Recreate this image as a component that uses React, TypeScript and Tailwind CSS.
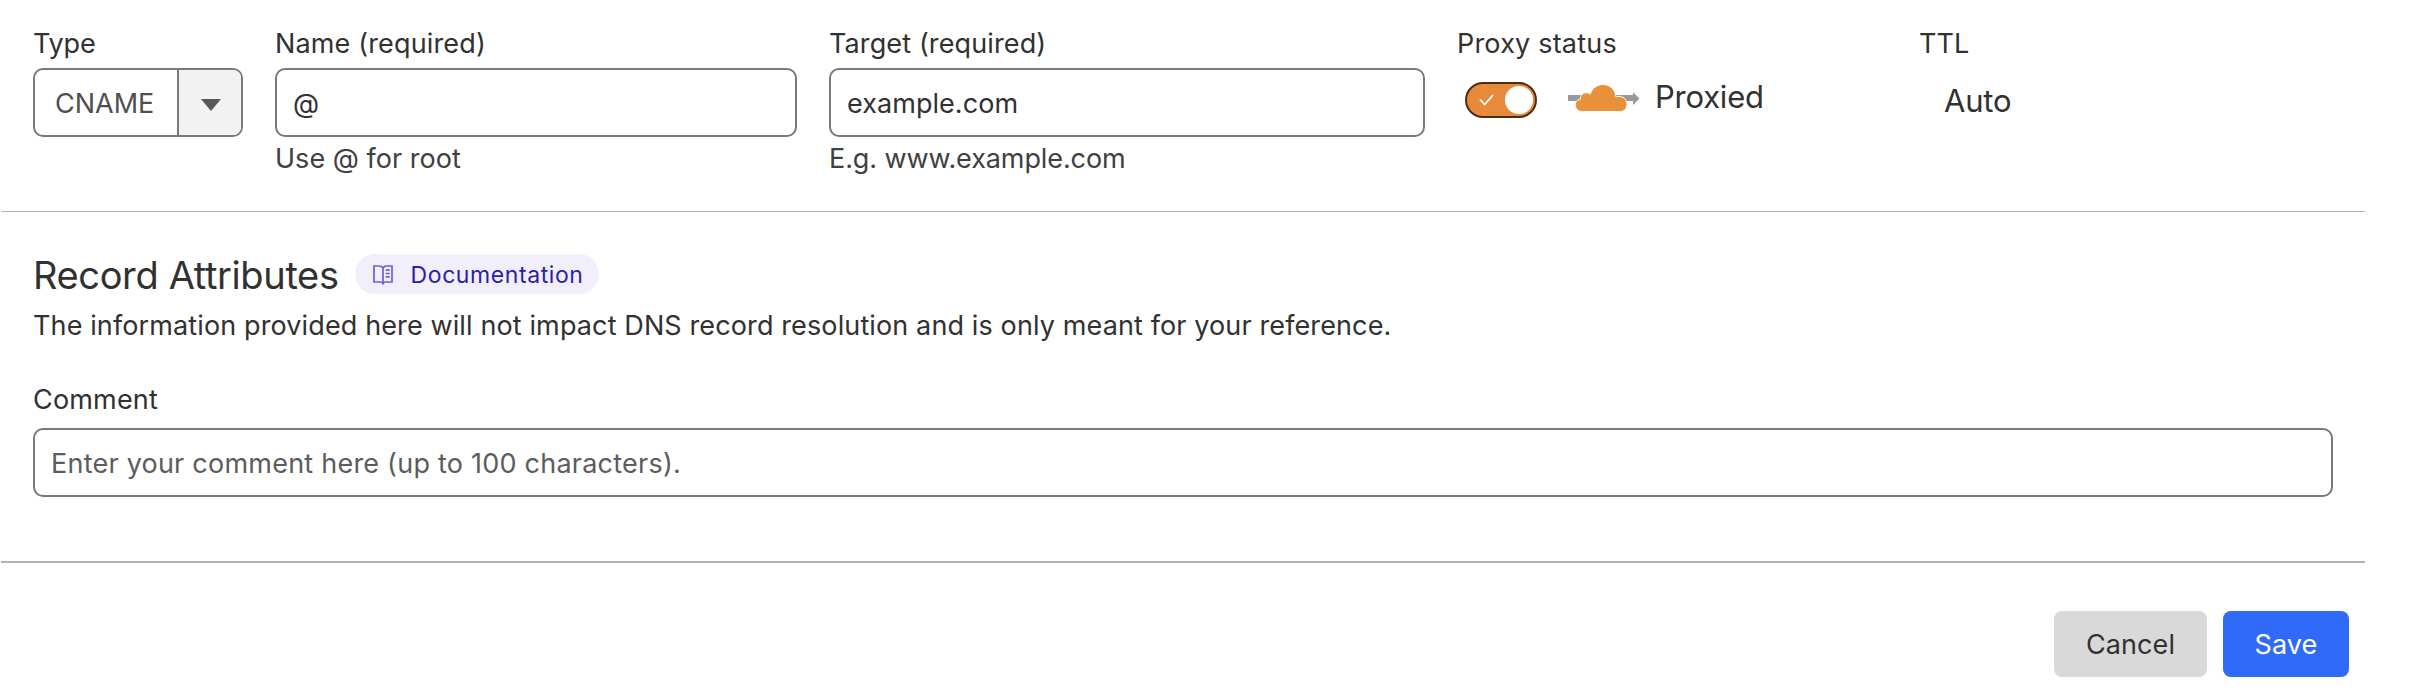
import type { ReactNode } from 'react';

function Label({ children, className = '' }: { children: ReactNode; className?: string }) {
  return <div className={`h-[34px] whitespace-nowrap leading-[36px] text-[#313131] ${className}`}>{children}</div>;
}

function Field({ value, className = '' }: { value: string; className?: string }) {
  return (
    <div className={`mt-2 flex h-[69px] items-center rounded-[10px] border-2 border-[#797979] bg-white pt-[3px] pl-4 whitespace-nowrap ${className}`}>
      {value}
    </div>
  );
}

function ProxyToggle() {
  return (
    <div className="flex h-9 w-[72px] items-center justify-between rounded-full border-2 border-[#4e2c10] bg-[#e88a3c] pr-[2px] pl-3">
      <svg className="h-3 w-[15px]" viewBox="0 0 15 12" fill="none" stroke="white" strokeWidth="1.8">
        <path d="M1 5.500l4.700 5L14 1" />
      </svg>
      <div className="size-7 rounded-full bg-white" />
    </div>
  );
}

function CloudIcon() {
  return (
    <svg className="h-[28px] w-[72px]" viewBox="0 0 72 28">
      <path d="M0 11h65V8l6.500 6.500L65 21v-4H0z" fill="#999" />
      <path
        d="M13 27.5a6.500 6.500 0 0 1-5.500-8.500c.6-2 2.300-3.400 4.700-3.600C12.300 11.400 14.800 8.700 18 8.700c1.700 0 3 .4 4.200 1.400C24 4.500 29 .5 35.200.5 42 .5 47.200 5.600 48 12.900c1.200-.5 2.600-.7 4-.4 4.400.3 7 3.800 7 7.900 0 4-2.800 7.100-6.500 7.100z"
        fill="#e8903a"
        stroke="white"
      />
    </svg>
  );
}

function BookIcon() {
  return (
    <svg className="mt-px h-5 w-5" viewBox="0 0 20 20" fill="none" stroke="#6a5ee0" strokeWidth="1.7">
      <path d="M10 3C9 1.500 8 1 6.500 1H1v16h6.500c1.200 0 2 .5 2.500 1.500.5-1 1.300-1.500 2.500-1.500H19V1h-5.500C12 1 11 1.500 10 3zM10 3v15.500M12.700 5.200h4M12.700 8.500h4M12.700 11.800h4" />
    </svg>
  );
}

export default function App() {
  return (
    <main className="h-[694px] w-[2410px] overflow-hidden bg-white font-['Inter',sans-serif] text-[27px] tracking-[0.12px] text-[#313131]">
      <section className="ml-px flex h-[212px] w-[2364px] border-b border-[#b3b3b3] pt-[26px] pl-8">
        <div className="w-[242px]">
          <Label className="tracking-[-0.15px]">Type</Label>
          <div className="mt-2 flex h-[69px] w-[210px] overflow-hidden rounded-[10px] border-2 border-[#797979]">
            <div className="flex w-[142px] items-center pt-[3px] pl-[20px] tracking-normal text-[#4f4f4f]">CNAME</div>
            <div className="flex flex-1 items-center justify-center border-l-2 border-[#797979] bg-[#f2f2f2] pl-[2px]">
              <svg className="mt-1 h-3 w-5" viewBox="0 0 20 12">
                <path d="M0 0h20L10 12z" fill="#595959" />
              </svg>
            </div>
          </div>
        </div>
        <div className="w-[554px]">
          <Label className="tracking-[0.15px]">Name (required)</Label>
          <Field value="@" className="w-[522px]" />
          <div className="mt-1 leading-[36px] tracking-[0.03px] text-[#404040]">Use @ for root</div>
        </div>
        <div className="w-[628px]">
          <Label>Target (required)</Label>
          <Field value="example.com" className="w-[596px] tracking-[0.05px]" />
          <div className="mt-1 leading-[36px] tracking-[-0.1px] text-[#404040]">E.g. www.example.com</div>
        </div>
        <div className="w-[462px]">
          <Label className="tracking-[0.2px]">Proxy status</Label>
          <div className="flex h-20 items-start pl-2">
            <div className="mt-[22px]">
              <ProxyToggle />
            </div>
            <div className="mt-6 ml-[31px]">
              <CloudIcon />
            </div>
            <div className="mt-[17px] ml-[15px] text-[31px] leading-10 tracking-[-0.23px]">Proxied</div>
          </div>
        </div>
        <div>
          <Label className="tracking-[0.07px]">TTL</Label>
          <div className="mt-[21px] ml-[25px] text-[31px] leading-10 tracking-[-0.19px]">Auto</div>
        </div>
      </section>

      <section className="ml-px h-[351px] w-[2364px] border-b-2 border-[#b3b3b3] pt-[42px] pr-8 pl-8">
        <div className="flex h-10 items-center">
          <h2 className="mt-[2px] text-[38px] leading-10 tracking-[-0.36px] whitespace-nowrap">Record Attributes</h2>
          <a className="ml-4 flex h-10 w-[244px] items-center rounded-full bg-[#f1effb] pl-[18px] text-[23px] tracking-[0.58px] text-[#2c1fa3]">
            <BookIcon />
            <span className="mt-[2px] ml-[18px]">Documentation</span>
          </a>
        </div>
        <p className="mt-[14px] h-[34px] leading-[36px] tracking-[0.12px] whitespace-nowrap">
          The information provided here will not impact DNS record resolution and is only meant for your reference.
        </p>
        <Label className="mt-10 tracking-[0.18px]">Comment</Label>
        <Field value="Enter your comment here (up to 100 characters)." className="mt-[12px] tracking-[0.23px] text-[#5c5c5c]" />
      </section>

      <footer className="flex justify-end gap-4 pt-12 pr-[61px]">
        <button className="h-[66px] w-[153px] rounded-[8px] bg-[#d9d9d9] pt-[2px] tracking-[0.1px]">Cancel</button>
        <button className="h-[66px] w-[126px] rounded-[8px] bg-[#2f6bf6] pt-[2px] text-white">Save</button>
      </footer>
    </main>
  );
}
